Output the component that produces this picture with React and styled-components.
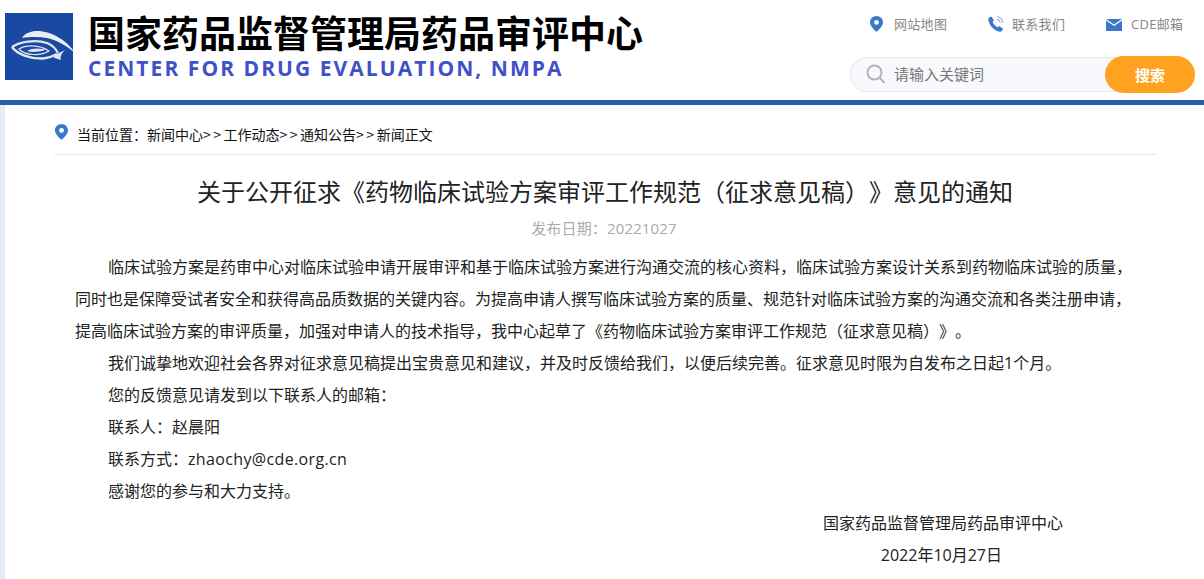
import React from "react";
import styled, { createGlobalStyle } from "styled-components";

const cjk = `"Noto Sans CJK SC", "Noto Sans", sans-serif`;
const mixed = `"Open Sans", "Noto Sans CJK SC", sans-serif`;

const GlobalStyle = createGlobalStyle`
  html, body { margin: 0; padding: 0; background: #fff; }
  body {
    font-family: ${cjk};
    color: #333;
    overflow: hidden;
    text-spacing-trim: space-all;
  }
`;

const Page = styled.div`
  width: 1204px;
  height: 579px;
  overflow: hidden;
  background: #e6edf8;
`;

const Header = styled.header`
  height: 100px;
  background: #fff;
  display: flex;
  justify-content: space-between;
  padding: 13px 9px 0 5px;
  box-sizing: border-box;
`;

const Brand = styled.div`
  display: flex;
  gap: 15px;
`;

const LogoBox = styled.div`
  width: 68px;
  height: 67px;
  background: #1a49a2;

  svg {
    display: block;
    overflow: visible;
  }
`;

const BrandText = styled.div`
  display: flex;
  flex-direction: column;
`;

const CnTitle = styled.div`
  font-size: 37px;
  line-height: 38px;
  font-weight: 700;
  color: #000;
`;

const EnTitle = styled.div`
  margin-top: 5px;
  font-family: "Open Sans", sans-serif;
  font-size: 21px;
  line-height: 24px;
  font-weight: 700;
  letter-spacing: 2.05px;
  color: #3f51c8;
`;

const Tools = styled.div`
  width: 345px;
  display: flex;
  flex-direction: column;
`;

const LinkRow = styled.div`
  display: flex;
  padding-left: 20px;
  height: 44px;
  align-items: flex-start;
`;

const TopLink = styled.a`
  width: ${(p) => p.$w}px;
  display: flex;
  align-items: center;
  font-family: ${mixed};
  font-size: 13px;
  line-height: 22px;
  letter-spacing: 0.3px;
  color: #888;

  svg {
    flex: none;
    margin-right: ${(p) => p.$gap}px;
    margin-top: ${(p) => p.$drop || 0}px;
  }
`;

const SearchBar = styled.div`
  height: 35px;
  position: relative;
  background: #f8f9fd;
  border: 1px solid #e4e6ea;
  border-radius: 18px;
  display: flex;
  align-items: center;
  padding: 0 0 2px 15px;
  gap: 8px;
  box-sizing: border-box;
  font-size: 15px;
  color: #777;
`;

const SearchButton = styled.button`
  position: absolute;
  right: -1px;
  top: -2px;
  width: 90px;
  height: 37px;
  padding: 0;
  border: none;
  border-radius: 19px;
  background: #ffa21f;
  color: #fff;
  font-family: ${cjk};
  font-size: 15px;
  font-weight: 700;
`;

const Rule = styled.div`
  height: 5px;
  background: #2a5caa;
`;

const Sheet = styled.main`
  margin-left: 5px;
  height: 474px;
  background: #fff;
  padding: 0 48px 0 49px;
`;

const Crumbs = styled.div`
  height: 50px;
  display: flex;
  align-items: center;
  gap: 9px;
  font-size: 14px;
  color: #111;
  border-bottom: 1px solid #e8e8e8;
  box-sizing: border-box;
  padding: 8px 0 0 1px;

  svg {
    margin-bottom: 4px;
  }
`;

const Sep = styled.span`
  letter-spacing: 2.5px;
`;

const Title = styled.h1`
  margin: 19px 0 0;
  font-size: 24px;
  line-height: 34px;
  font-weight: 400;
  color: #222;
  text-align: center;
`;

const DateLine = styled.div`
  margin-top: 10px;
  padding-right: 2px;
  font-family: ${mixed};
  font-size: 15px;
  line-height: 20px;
  letter-spacing: 0.15px;
  color: #aaa;
  text-align: center;
`;

const Body = styled.div`
  margin-top: 13px;
  padding: 0 21px;
`;

const Para = styled.p`
  margin: 0;
  font-family: ${mixed};
  font-size: 16px;
  line-height: 32px;
  color: #222;
  text-indent: 33px;
`;

const Email = styled.span`
  letter-spacing: 0.35px;
`;

const Signature = styled(Para)`
  text-indent: 0;
  text-align: right;
  padding-right: ${(p) => p.$pr}px;
`;

const Pin = () => (
  <svg width="13" height="16" viewBox="0 0 13 16">
    <path
      fillRule="evenodd"
      d="M6.5 0C2.9 0 0 2.8 0 6.3C0 10.2 4.3 14 6.5 16C8.7 14 13 10.2 13 6.3C13 2.8 10.1 0 6.5 0ZM6.5 4A2.4 2.4 0 1 1 6.5 8.8A2.4 2.4 0 1 1 6.5 4Z"
      fill="#3b78c9"
    />
  </svg>
);

const PhoneIcon = () => (
  <svg width="16" height="16" viewBox="0 0 16 16">
    <path
      d="M1.2 1.6L3.4 0.6L6 4.2L4.6 5.8C5.4 8 7.4 10.2 9.8 11.4L11.4 10L15 12.8L14 15C13.4 15.8 12 16 10.8 15.6C5.8 14 1.6 9.4 0.4 4.4C0.2 3.2 0.4 2.2 1.2 1.6Z"
      fill="#3b78c9"
    />
    <path d="M8.4 3.2C10.4 3.4 12 5 12.2 7M9 0.8C12 1 14.6 3.6 14.8 6.6" fill="none" stroke="#8db2e2" strokeWidth="1.1" />
  </svg>
);

const MailIcon = () => (
  <svg width="16" height="12" viewBox="0 0 16 12">
    <path d="M0 0H16L8 5.4Z" fill="#3b78c9" />
    <path d="M0 1.6L8 7L16 1.6V12H0Z" fill="#3b78c9" />
  </svg>
);

const SearchIcon = () => (
  <svg width="20" height="20" viewBox="0 0 20 20">
    <circle cx="8.5" cy="8.5" r="7" fill="none" stroke="#b4b4b4" strokeWidth="2" />
    <path d="M13.8 14L18.6 19" stroke="#b4b4b4" strokeWidth="2" />
  </svg>
);

const Logo = () => (
  <LogoBox>
    <svg width="68" height="67" viewBox="0 0 68 67">
      <path d="M17 25C20 20 26 18 32 18C46 18 62 27 70 40C62 33 52 27 42 25C33 23.500 24 24 17 25Z" fill="#e9edf5" />
      <path d="M7 34C14 29 30 26 42 30C47 32 51 36 53 40" fill="none" stroke="#e2e6ef" strokeWidth="2.2" />
      <path d="M7 34C12 41 25 46 38 45.500C43 45 47 44 52 41" fill="none" stroke="#e2e6ef" strokeWidth="2.4" />
      <path d="M50 42L60 37C56 41 55 44 56 47C53 46 51 45 49 45Z" fill="#e2e6ef" />
      <path d="M14 36C20 32 34 31 44 38C36 43 20 43 14 36Z" fill="none" stroke="#dfe4ee" strokeWidth="1.2" />
      <path d="M22 38C26 35 33 35 38 36L40 34.500L39 37.500C33 39 27 39.500 22 38Z" fill="#e2e6ef" />
    </svg>
  </LogoBox>
);

export default function App() {
  return (
    <Page>
      <GlobalStyle />
      <Header>
        <Brand>
          <Logo />
          <BrandText>
            <CnTitle>国家药品监督管理局药品审评中心</CnTitle>
            <EnTitle>CENTER FOR DRUG EVALUATION, NMPA</EnTitle>
          </BrandText>
        </Brand>
        <Tools>
          <LinkRow>
            <TopLink $w={118} $gap={11}><Pin />网站地图</TopLink>
            <TopLink $w={118} $gap={8}><PhoneIcon />联系我们</TopLink>
            <TopLink $w={85} $gap={9} $drop={2}><MailIcon />CDE邮箱</TopLink>
          </LinkRow>
          <SearchBar>
            <SearchIcon />
            请输入关键词
            <SearchButton>搜索</SearchButton>
          </SearchBar>
        </Tools>
      </Header>
      <Rule />
      <Sheet>
        <Crumbs>
          <Pin />
          <span>
            当前位置：新闻中心<Sep>&gt;&gt;</Sep>工作动态<Sep>&gt;&gt;</Sep>通知公告<Sep>&gt;&gt;</Sep>新闻正文
          </span>
        </Crumbs>
        <Title>关于公开征求《药物临床试验方案审评工作规范（征求意见稿）》意见的通知</Title>
        <DateLine>发布日期：20221027</DateLine>
        <Body>
          <Para>临床试验方案是药审中心对临床试验申请开展审评和基于临床试验方案进行沟通交流的核心资料，临床试验方案设计关系到药物临床试验的质量，同时也是保障受试者安全和获得高品质数据的关键内容。为提高申请人撰写临床试验方案的质量、规范针对临床试验方案的沟通交流和各类注册申请，提高临床试验方案的审评质量，加强对申请人的技术指导，我中心起草了《药物临床试验方案审评工作规范（征求意见稿）》。</Para>
          <Para>我们诚挚地欢迎社会各界对征求意见稿提出宝贵意见和建议，并及时反馈给我们，以便后续完善。征求意见时限为自发布之日起1个月。</Para>
          <Para>您的反馈意见请发到以下联系人的邮箱：</Para>
          <Para>联系人：赵晨阳</Para>
          <Para>联系方式：<Email>zhaochy@cde.org.cn</Email></Para>
          <Para>感谢您的参与和大力支持。</Para>
          <Signature $pr={72}>国家药品监督管理局药品审评中心</Signature>
          <Signature $pr={133}>2022年10月27日</Signature>
        </Body>
      </Sheet>
    </Page>
  );
}
